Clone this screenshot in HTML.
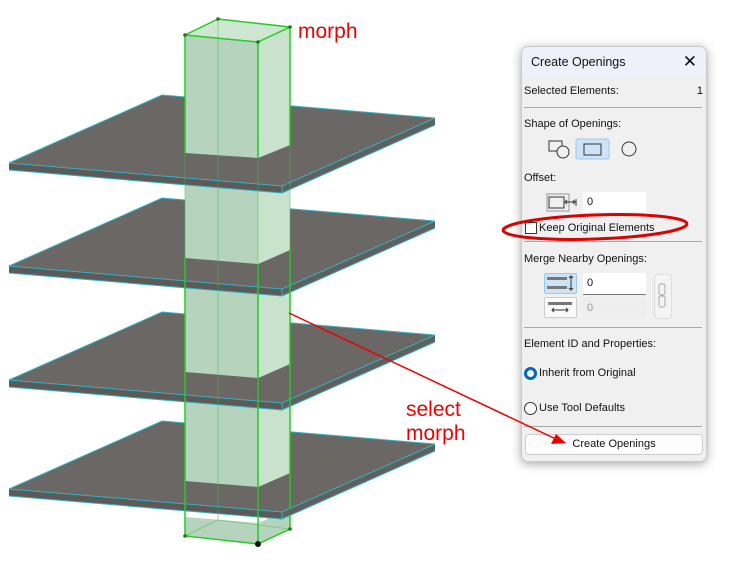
<!DOCTYPE html>
<html><head><style>
body{margin:0;width:745px;height:580px;background:#fff;position:relative;overflow:hidden;font-family:"Liberation Sans",sans-serif}
.dlg{position:absolute;left:521px;top:46px;width:184px;height:414px;background:#f0f0f0;border:1px solid #c8c8c8;border-radius:7px;box-shadow:0 2px 10px rgba(0,0,0,.35);font-size:11px;color:#111;overflow:hidden}
.hd{height:30px;background:#eef1f9;font-size:12.5px;line-height:30px;padding-left:9px}
.ab{position:absolute}
.hr{position:absolute;left:2px;right:4px;height:1px;background:#a8a8a8}
.inp{position:absolute;background:#fff;border-bottom:1px solid #777;font-size:11px;line-height:20px;padding-left:4px}
</style></head><body>
<svg width="745" height="580" style="position:absolute;left:0;top:0">
<defs>
<g id="slab"><polygon points="9,163 162,95 435,118 282,186" fill="#6b6764"/>
<polygon points="9,163 282,186 282,193 9,170" fill="#5c5956"/>
<polygon points="282,186 435,118 435,125 282,193" fill="#615e5b"/>
<polyline points="9,163 162,95 435,118 282,186 9,163" fill="none" stroke="#2fb4c8" stroke-width="1"/>
<polyline points="9,170 282,193 435,125" fill="none" stroke="#2fb4c8" stroke-width="1"/>
<line x1="282" y1="186" x2="282" y2="193" stroke="#2fb4c8"/></g>
</defs>
<polygon points="185,517 258,523 290,509 290,529 258,544 185,536" fill="#b6d3bd"/>
<polyline points="185,517 185,536 258,544 290,529 290,509" fill="none" stroke="#22cc22" stroke-width="1.5"/>
<line x1="258" y1="523" x2="258" y2="544" stroke="#22cc22" stroke-width="1.5"/>
<circle cx="258" cy="544" r="3" fill="#111"/>
<use href="#slab" y="326"/>
<polygon points="185,372 258,378 290,364 290,473 258,487 185,481" fill="#b6d3bd"/>
<polygon points="258,378 290,364 290,473 258,487" fill="#c8e2cc"/>
<use href="#slab" y="217"/>
<polygon points="185,258 258,264 290,250 290,364 258,378 185,372" fill="#b6d3bd"/>
<polygon points="258,264 290,250 290,364 258,378" fill="#c8e2cc"/>
<use href="#slab" y="103"/>
<polygon points="185,153 258,158 290,145 290,250 258,264 185,258" fill="#b6d3bd"/>
<polygon points="258,158 290,145 290,250 258,264" fill="#c8e2cc"/>
<use href="#slab" y="0"/>
<polygon points="185,35 218,19 290,27 290,145 258,158 185,153" fill="#b6d3bd"/>
<polygon points="258,42 290,27 290,145 258,158" fill="#c8e2cc"/>
<polygon points="185,35 218,19 290,27 258,42" fill="#cfe6d3"/>
<g stroke="#22cc22" stroke-width="1.5" fill="none">
<polyline points="185,35 218,19 290,27 258,42 185,35"/>
<line x1="185" y1="35" x2="185" y2="153"/><line x1="258" y1="42" x2="258" y2="158"/><line x1="290" y1="27" x2="290" y2="145"/>
<line x1="185" y1="258" x2="185" y2="372"/><line x1="258" y1="264" x2="258" y2="378"/><line x1="290" y1="250" x2="290" y2="364"/>
<line x1="185" y1="372" x2="185" y2="481"/><line x1="258" y1="378" x2="258" y2="487"/><line x1="290" y1="364" x2="290" y2="473"/>
<line x1="185" y1="481" x2="185" y2="517"/><line x1="258" y1="487" x2="258" y2="523"/><line x1="290" y1="473" x2="290" y2="509"/>
</g>
<g stroke="#44bb44" stroke-width="0.8" opacity="0.6">
<line x1="218" y1="19" x2="218" y2="520"/><line x1="185" y1="153" x2="185" y2="258"/><line x1="258" y1="158" x2="258" y2="264"/><line x1="290" y1="145" x2="290" y2="250"/>
<line x1="218" y1="520" x2="185" y2="536"/><line x1="218" y1="520" x2="290" y2="529"/>
</g>
<circle cx="185" cy="35" r="1.8" fill="#1a7a1a"/><circle cx="218" cy="19" r="1.8" fill="#1a7a1a"/><circle cx="290" cy="27" r="1.8" fill="#1a7a1a"/><circle cx="258" cy="42" r="1.8" fill="#1a7a1a"/><circle cx="185" cy="536" r="1.8" fill="#1a7a1a"/><circle cx="290" cy="529" r="1.8" fill="#1a7a1a"/>
<text x="298" y="38" fill="#e00" font-size="21" font-family="Liberation Sans">morph</text>
<text x="406" y="416" fill="#e00" font-size="21" font-family="Liberation Sans">select</text>
<text x="406" y="440" fill="#e00" font-size="21" font-family="Liberation Sans">morph</text>
</svg>
<div class="dlg">
<div class="hd">Create Openings<span style="position:absolute;right:9px;top:0;font-size:17px">✕</span></div>
<div class="ab" style="left:2px;top:38px">Selected Elements:</div><div class="ab" style="right:3px;top:38px">1</div>
<div class="hr" style="top:60px"></div>
<div class="ab" style="left:2px;top:71px">Shape of Openings:</div>
<svg class="ab" style="left:24px;top:91px" width="100" height="22">
<rect x="3" y="3" width="13" height="10" fill="none" stroke="#333"/><circle cx="17" cy="14" r="6" fill="#f0f0f0" stroke="#333"/>
<rect x="30" y="1" width="33" height="20" rx="2" fill="#cde4f7" stroke="#9cc8ee"/><rect x="38" y="6" width="17" height="11" fill="none" stroke="#333"/>
<circle cx="83" cy="11" r="7" fill="none" stroke="#333"/></svg>
<div class="ab" style="left:2px;top:125px">Offset:</div>
<svg class="ab" style="left:24px;top:145px" width="34" height="22"><rect x="1" y="2" width="22" height="17" fill="none" stroke="#999"/><rect x="3" y="5" width="15" height="11" fill="none" stroke="#333"/><path d="M19 10h10M21 8l-2 2 2 2M27 8l2 2-2 2M30 7v7" stroke="#333" fill="none"/></svg>
<div class="inp" style="left:61px;top:145px;width:59px;height:20px;border-bottom:none">0</div>
<div class="ab" style="left:3px;top:175px;width:10px;height:10px;border:1px solid #333;background:#fff"></div>
<div class="ab" style="left:17px;top:175px">Keep Original Elements</div>
<div class="hr" style="top:194px"></div>
<div class="ab" style="left:2px;top:206px">Merge Nearby Openings:</div>
<div class="ab" style="left:22px;top:226px;width:31px;height:19px;background:#cde4f7;border:1px solid #9cc8ee;border-radius:2px"></div>
<svg class="ab" style="left:24px;top:228px" width="30" height="16"><rect x="1" y="2" width="20" height="3" fill="#777"/><rect x="1" y="11" width="20" height="3" fill="#777"/><path d="M25 1v14M23 3l2-2 2 2M23 13l2 2 2-2" stroke="#333" fill="none"/></svg>
<div class="ab" style="left:22px;top:250px;width:31px;height:19px;background:#fafafa;border:1px solid #ccc;border-radius:2px"></div>
<svg class="ab" style="left:24px;top:252px" width="30" height="16"><rect x="2" y="3" width="24" height="3" fill="#777"/><path d="M6 11h16M8 9l-2 2 2 2M20 9l2 2-2 2" stroke="#333" fill="none"/></svg>
<div class="inp" style="left:61px;top:226px;width:59px;height:21px">0</div>
<div class="inp" style="left:61px;top:251px;width:59px;height:20px;background:#eee;border:none;color:#999">0</div>
<div class="ab" style="left:132px;top:227px;width:16px;height:43px;border:1px solid #ddd;border-radius:4px;background:#f4f4f4"></div>
<svg class="ab" style="left:135px;top:236px" width="10" height="26"><rect x="2" y="1" width="6" height="11" rx="2" fill="none" stroke="#aaa"/><rect x="2" y="13" width="6" height="11" rx="2" fill="none" stroke="#aaa"/></svg>
<div class="hr" style="top:280px"></div>
<div class="ab" style="left:2px;top:291px">Element ID and Properties:</div>
<div class="ab" style="left:2px;top:320px;width:7px;height:7px;border:3px solid #0067c0;border-radius:50%;background:#fff"></div>
<div class="ab" style="left:17px;top:320px">Inherit from Original</div>
<div class="ab" style="left:2px;top:355px;width:11px;height:11px;border:1px solid #333;border-radius:50%;background:#fff"></div>
<div class="ab" style="left:17px;top:355px">Use Tool Defaults</div>
<div class="hr" style="top:379px"></div>
<div class="ab" style="left:3px;top:387px;width:176px;height:19px;border:1px solid #ccc;border-radius:4px;background:#fdfdfd;text-align:center;line-height:19px">Create Openings</div>
</div>
<svg width="745" height="580" style="position:absolute;left:0;top:0;pointer-events:none">
<ellipse cx="595" cy="227" rx="92" ry="12" fill="none" stroke="#d00" stroke-width="3" transform="rotate(-2 595 227)"/>
<line x1="289" y1="313" x2="558" y2="440" stroke="#e00" stroke-width="1.5"/>
<polygon points="566,443 551,444 556,434" fill="#e00"/>
</svg>
</body></html>
